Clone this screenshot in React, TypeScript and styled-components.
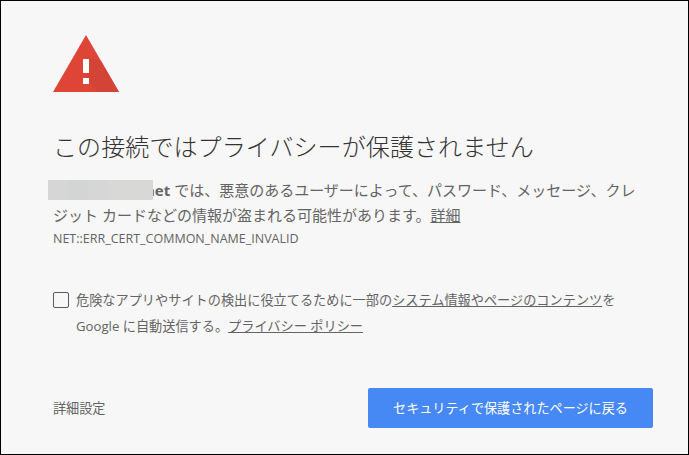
import React from 'react';
import styled, { createGlobalStyle } from 'styled-components';

const GlobalStyle = createGlobalStyle`
  html, body {
    margin: 0;
    padding: 0;
    background: #f7f7f7;
  }
`;

const WarningIcon = (): JSX.Element => (
  <StyledIcon viewBox="0 0 66 57" width="66" height="57">
    <path d="M33 0 L66 57 H0 Z" fill="#de4537" />
    <path d="M36 24 V38 L31 43 L45 57 H66 L48 26 L39 24 Z" fill="#d34336" />
    <rect x="30" y="24" width="6" height="14" fill="#fff" />
    <rect x="30" y="43" width="6" height="6" fill="#fff" />
  </StyledIcon>
);

const blurBlocks = [
  { width: 20, color: '#d6d6d6' },
  { width: 20, color: '#d3d4d4' },
  { width: 20, color: '#d6d6d6' },
  { width: 45, color: '#d8d8d6' },
];

const App = (): JSX.Element => (
  <StyledPage lang="ja">
    <GlobalStyle />
    <WarningIcon />
    <StyledTitle>この接続ではプライバシーが保護されません</StyledTitle>
    <StyledMessage>
      <StyledBlur>
        {blurBlocks.map((block, i) => (
          <StyledBlurBlock key={i} width={block.width} color={block.color} />
        ))}
      </StyledBlur>
      <StyledHost>net</StyledHost> では、悪意のあるユーザーによって、パスワード、メッセージ、クレジット カードなどの情報が盗まれる可能性があります。
      <StyledLink>詳細</StyledLink>
    </StyledMessage>
    <StyledErrorCode>NET::ERR_CERT_COMMON_NAME_INVALID</StyledErrorCode>
    <StyledOptIn>
      <StyledCheckbox />
      <StyledOptInText>
        危険なアプリやサイトの検出に役立てるために一部の<StyledLink>システム情報やページのコンテンツ</StyledLink>を Google に自動送信する。<StyledLink>プライバシー ポリシー</StyledLink>
      </StyledOptInText>
    </StyledOptIn>
    <StyledFooter>
      <StyledDetails>詳細設定</StyledDetails>
      <StyledPrimaryButton>セキュリティで保護されたページに戻る</StyledPrimaryButton>
    </StyledFooter>
  </StyledPage>
);

export default App;

const fontStack = `"Open Sans", "Noto Sans CJK JP", sans-serif`;

const StyledPage = styled.div`
  box-sizing: border-box;
  width: 689px;
  height: 455px;
  padding: 34px 35px 0 52px;
  border: 1px solid #000;
  background: #f7f7f7;
  color: #646464;
  font-family: ${fontStack};
  display: flex;
  flex-direction: column;
`;

const StyledIcon = styled.svg`
  display: block;
  flex: none;
`;

const StyledTitle = styled.h1`
  margin: 37px 0 0;
  font-size: 24px;
  font-weight: 300;
  line-height: 36px;
  letter-spacing: 0.1px;
  color: #333;
`;

const StyledMessage = styled.p`
  margin: 13px 0 0;
  padding-right: 12px;
  font-size: 15px;
  line-height: 25px;
`;

/* pixelated mask lying over the start of the host name */
const StyledBlur = styled.span`
  position: relative;
  z-index: 1;
  display: inline-flex;
  margin: 0 -8px 0 -5px;
  vertical-align: -4px;
`;

const StyledBlurBlock = styled.span<{ width: number; color: string }>`
  display: block;
  width: ${(props) => props.width}px;
  height: 20px;
  background: ${(props) => props.color};
`;

const StyledHost = styled.b`
  font-weight: 700;
`;

const StyledLink = styled.a`
  color: #646464;
  text-decoration: underline;
`;

const StyledErrorCode = styled.div`
  margin-top: 1px;
  font-size: 12.5px;
  line-height: 20px;
`;

const StyledOptIn = styled.div`
  display: flex;
  margin-top: 38px;
`;

const StyledCheckbox = styled.span`
  box-sizing: border-box;
  flex: none;
  width: 16px;
  height: 16px;
  margin: 5px 7px 0 0;
  border: 1px solid #5a5a5a;
  border-radius: 2px;
`;

const StyledOptInText = styled.div`
  font-size: 13.18px;
  line-height: 26px;
`;

const StyledFooter = styled.div`
  display: flex;
  align-items: center;
  justify-content: space-between;
  width: 600px;
  margin-top: 49px;
`;

const StyledDetails = styled.span`
  padding-bottom: 2px;
  font-size: 13.125px;
`;

const StyledPrimaryButton = styled.button`
  width: 285px;
  height: 40px;
  padding: 0 0 2px;
  border: none;
  border-radius: 2px;
  background: #4688f4;
  color: #fff;
  font-family: ${fontStack};
  font-size: 13.125px;
`;
